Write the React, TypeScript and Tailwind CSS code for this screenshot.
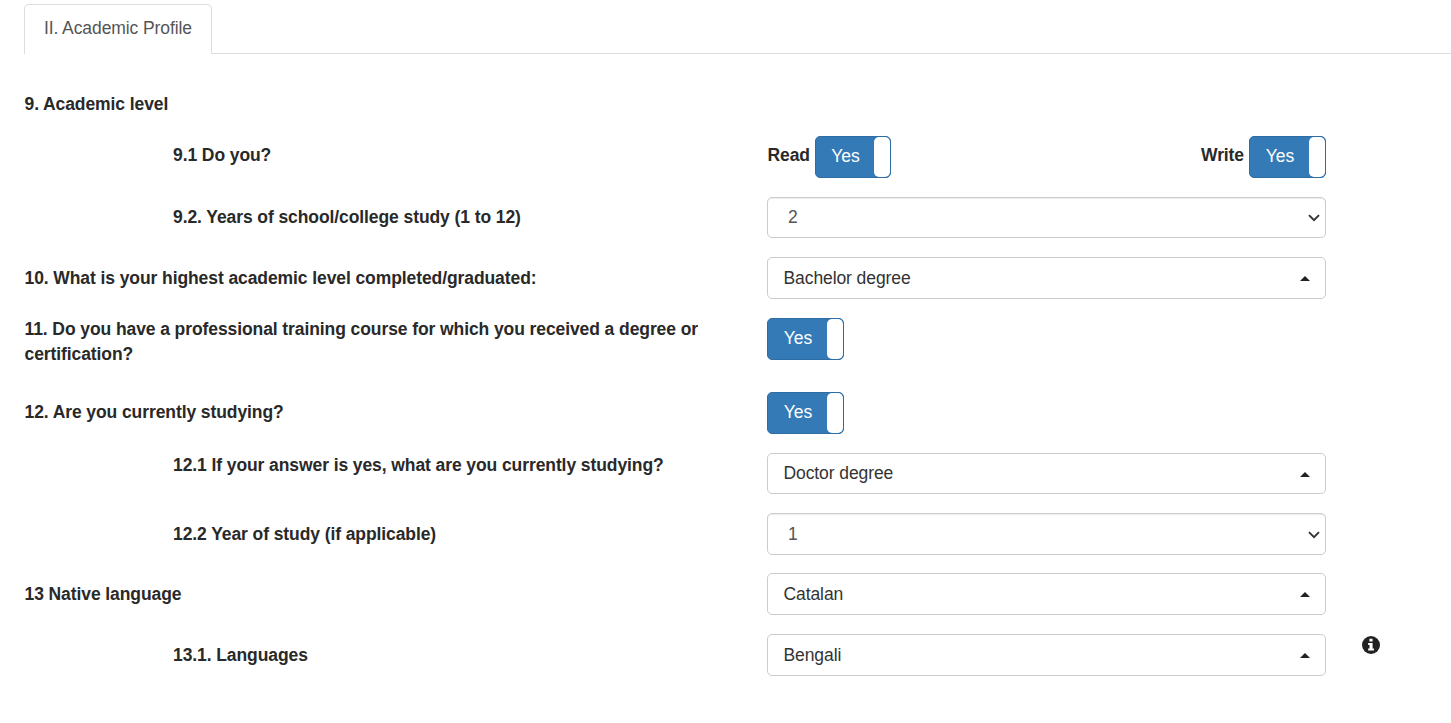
import type { ReactNode } from 'react';

function Toggle({ width = 'w-[77px]' }: { width?: string }) {
  return (
    <button className={`flex h-[42px] ${width} shrink-0 overflow-hidden rounded-[5px] border border-[#2e6da4] bg-[#337ab7] text-[17.5px] tracking-normal text-white`}>
      <span className="flex-1 pl-px text-center leading-[39px]">Yes</span>
      <span className="h-full w-[16px] rounded-[5px] bg-white" />
    </button>
  );
}

function Select({ value, height = 'h-[42px]' }: { value: string; height?: string }) {
  return (
    <div className={`flex ${height} w-[559px] items-center justify-between rounded-[5px] border border-[#ccc] pr-[5px] pl-[20px] text-[#555] shadow-[inset_0_1px_1px_rgba(0,0,0,0.075)]`}>
      <span className="leading-[25px]">{value}</span>
      <svg className="mt-px h-[8px] w-[12px]" viewBox="0 0 12 8" fill="none" stroke="#333" strokeWidth="1.9">
        <path d="M1 1.2 6 6.2 11 1.2" />
      </svg>
    </div>
  );
}

function Picker({ value, height = 'h-[42px]' }: { value: string; height?: string }) {
  return (
    <div className={`flex ${height} w-[559px] items-center justify-between rounded-[5px] border border-[#ccc] pr-[15px] pl-[15.5px] text-[#333]`}>
      <span className="leading-[25px]">{value}</span>
      <svg className="mt-px h-[5px] w-[10px]" viewBox="0 0 10 5" fill="#222">
        <path d="M0 5 5 0 10 5Z" />
      </svg>
    </div>
  );
}

function Row({ label, height, pad, indent, children }: { label: string; height: string; pad: string; indent?: boolean; children?: ReactNode }) {
  return (
    <div className={`flex ${height}`}>
      <div className={`w-[743px] shrink-0 pr-[36px] leading-[25px] font-bold ${pad} ${indent ? 'pl-[149px]' : 'pl-[0.5px]'}`}>{label}</div>
      {children}
    </div>
  );
}

export default function App() {
  return (
    <div className="h-[723px] overflow-hidden bg-white pt-[4px] pl-[24px] font-['Liberation_Sans',Arial,sans-serif] text-[17.5px] tracking-[-0.09px] text-[#292929]">
      <div className="flex h-[50px]">
        <div className="w-[188px] rounded-t-[5px] border border-b-0 border-[#ddd] pl-[19px] leading-[47px] whitespace-nowrap text-[#555]">II. Academic Profile</div>
        <div className="flex-1 border-b border-[#ddd]" />
      </div>
      <div className="pt-[37px]">
        <Row label="9. Academic level" height="h-[45px]" pad="pt-px" />
        <Row label="9.1 Do you?" height="h-[61px]" pad="pt-[7px]" indent>
          <div className="flex w-[559px] justify-between leading-[25px] font-bold">
            <div className="flex gap-[5px]">
              <span className="pt-[7px] pl-[0.5px]">Read</span>
              <div className="font-normal"><Toggle width="w-[76px]" /></div>
            </div>
            <div className="flex gap-[5px]">
              <span className="pt-[7px]">Write</span>
              <div className="font-normal"><Toggle /></div>
            </div>
          </div>
        </Row>
        <Row label="9.2. Years of school/college study (1 to 12)" height="h-[60px]" pad="pt-[8px]" indent>
          <Select value="2" height="h-[41px]" />
        </Row>
        <Row label="10. What is your highest academic level completed/graduated:" height="h-[61px]" pad="pt-[9px]">
          <Picker value="Bachelor degree" />
        </Row>
        <Row label="11. Do you have a professional training course for which you received a degree or certification?" height="h-[74px]" pad="-mt-px">
          <Toggle />
        </Row>
        <Row label="12. Are you currently studying?" height="h-[61px]" pad="pt-[8px]">
          <Toggle />
        </Row>
        <Row label="12.1 If your answer is yes, what are you currently studying?" height="h-[60px]" pad="pt-0" indent>
          <Picker value="Doctor degree" height="h-[41px]" />
        </Row>
        <Row label="12.2 Year of study (if applicable)" height="h-[60px]" pad="pt-[9px]" indent>
          <Select value="1" />
        </Row>
        <Row label="13 Native language" height="h-[61px]" pad="pt-[9px]">
          <Picker value="Catalan" />
        </Row>
        <Row label="13.1. Languages" height="h-[60px]" pad="pt-[9px]" indent>
          <Picker value="Bengali" />
          <svg className="mt-[2px] ml-[36px] h-[18px] w-[18px]" viewBox="0 0 17 17">
            <circle cx="8.5" cy="8.5" r="8.5" fill="#222" />
            <path d="M7 2.7h3v2.5H7ZM5.8 6.7H10v5.2h1.3v1.9H5.8v-1.9h1.3V8.5H5.8Z" fill="#fff" />
          </svg>
        </Row>
      </div>
    </div>
  );
}
